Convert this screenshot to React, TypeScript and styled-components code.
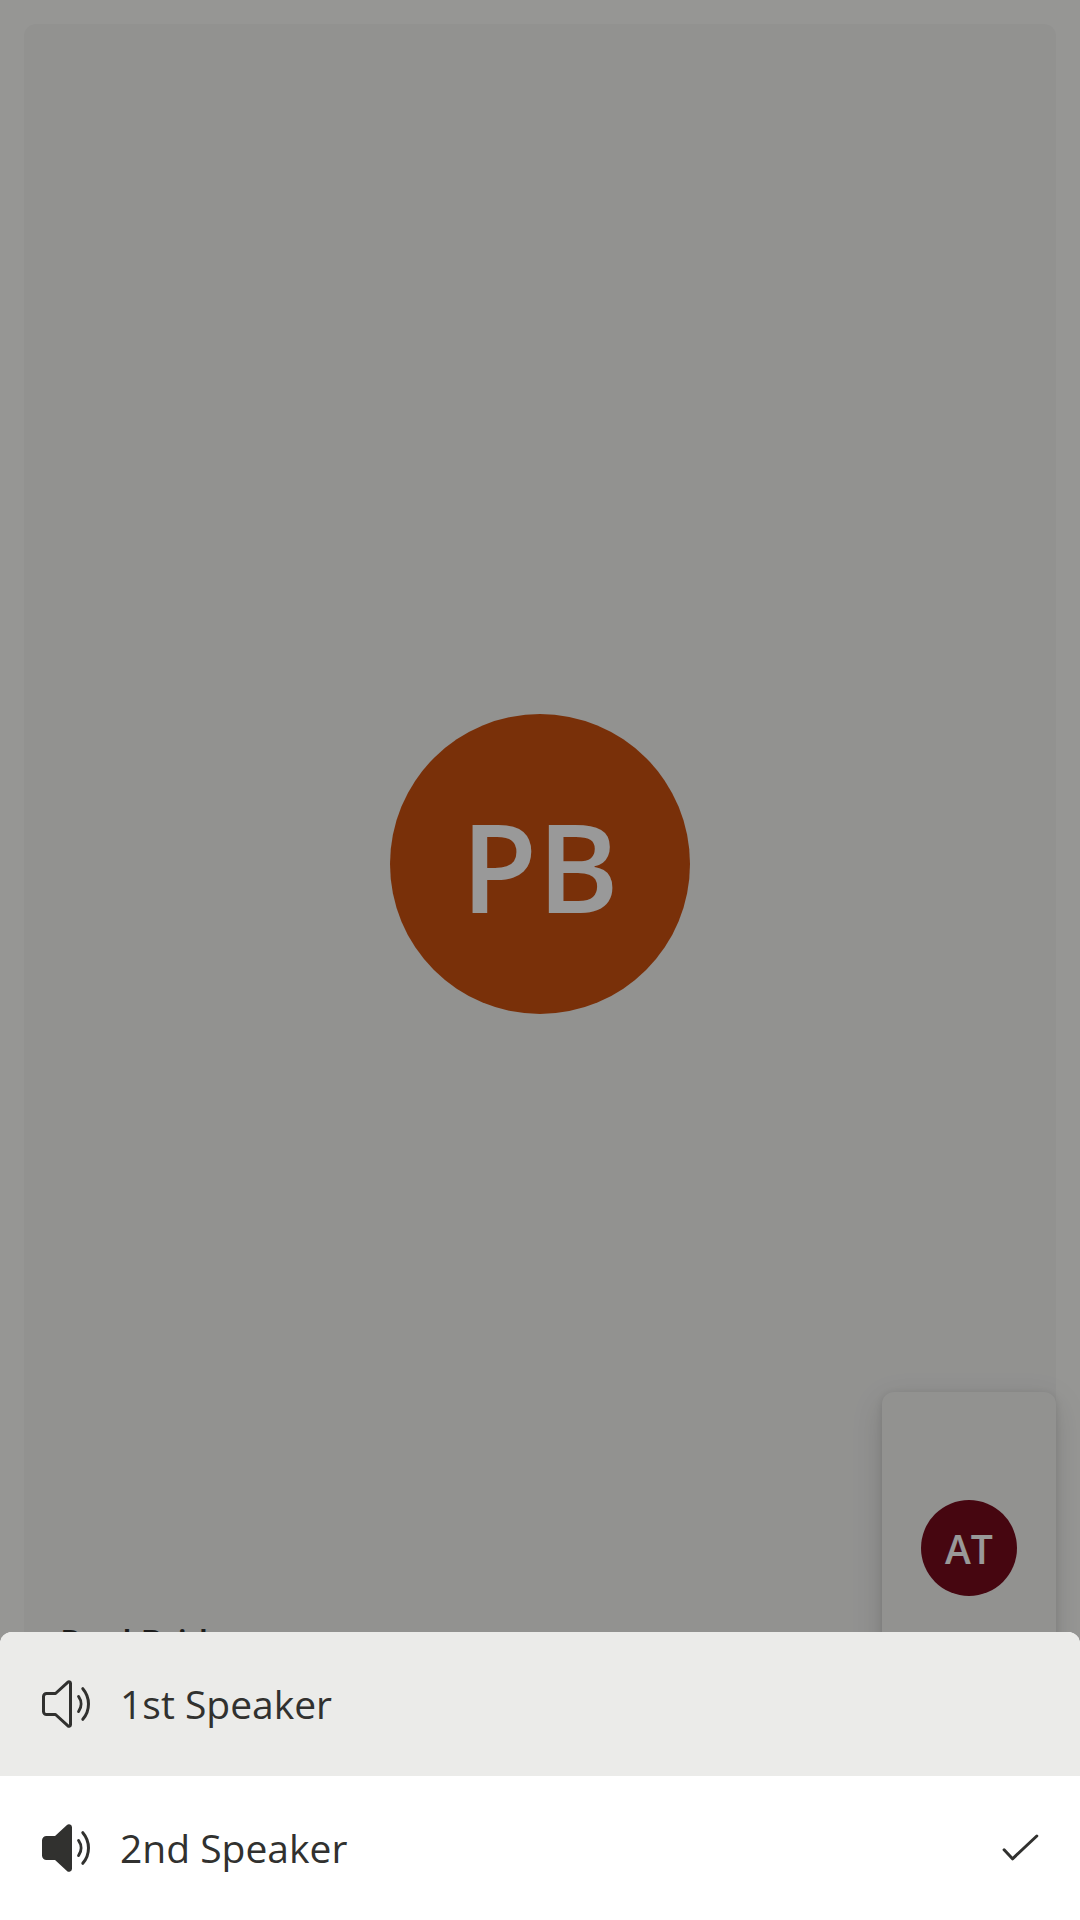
import React, { useState } from "react";
import styled, { createGlobalStyle } from "styled-components";

const GlobalStyle = createGlobalStyle`
  *, *::before, *::after { box-sizing: border-box; }
  body {
    margin: 0;
    font-family: "Open Sans", "Noto Sans", sans-serif;
    color: #31312f;
  }
`;

const CallScreen = styled.main`
  display: grid;
  min-height: 100vh;
  padding: 24px 24px 216px;
  background: #fafaf7;
`;

const VideoTile = styled.section`
  grid-area: 1 / 1;
  display: grid;
  place-items: center;
  border-radius: 12px;
  background: #f3f3f1;
`;

const LocalTile = styled(VideoTile)`
  place-self: end;
  width: 174px;
  height: 312px;
  box-shadow: 0 10px 32px rgba(0, 0, 0, 0.13), 0 2px 8px rgba(0, 0, 0, 0.11);
`;

const Avatar = styled.div<{ $size: number; $font: number; $color: string }>`
  grid-area: 1 / 1;
  display: flex;
  align-items: center;
  justify-content: center;
  width: ${(p) => p.$size}px;
  height: ${(p) => p.$size}px;
  border-radius: 50%;
  background: ${(p) => p.$color};
  color: #fff;
  font-size: ${(p) => p.$font}px;
  font-weight: 600;
`;

const DisplayName = styled.span`
  grid-area: 1 / 1;
  place-self: end start;
  padding: 36px;
  font-size: 34px;
  line-height: 52px;
  font-weight: 600;
`;

const Scrim = styled.div`
  position: fixed;
  inset: 0;
  display: flex;
  flex-direction: column;
  justify-content: flex-end;
  background: rgba(0, 0, 0, 0.4);
`;

const Drawer = styled.div`
  overflow: hidden;
  border-radius: 12px 12px 0 0;
  background: #fff;
`;

const DrawerItem = styled.button<{ $highlighted: boolean }>`
  display: flex;
  align-items: center;
  gap: 24px;
  width: 100%;
  height: 144px;
  padding: 0 36px;
  border: 0;
  background: ${(p) => (p.$highlighted ? "#ebebe9" : "#fff")};
  color: inherit;
  font-family: inherit;
  font-size: 39px;
  line-height: 52px;
  text-align: left;
  cursor: pointer;
`;

const ItemLabel = styled.span`
  flex: 1;
`;

const Icon = styled.svg`
  flex: none;
  width: 60px;
  height: 60px;
  fill: none;
  stroke: currentColor;
  stroke-linecap: round;
  stroke-linejoin: round;
`;

const SpeakerIcon = ({ filled }: { filled: boolean }) => (
  <Icon viewBox="0 0 20 20" aria-hidden="true">
    <path
      d="M3.5 6.5H6.5L10.66 2.7A.5.5 0 0 1 11.5 3.06V16.94A.5.5 0 0 1 10.66 17.3L6.5 13.5H3.5A1 1 0 0 1 2.5 12.5V7.5A1 1 0 0 1 3.5 6.5Z"
      fill={filled ? "currentColor" : "none"}
    />
    <path d="M14.2 7.5A4.3 4.3 0 0 1 14.2 12.5M15.6 4.9A7.8 7.8 0 0 1 15.6 15.1" />
  </Icon>
);

const CheckIcon = () => (
  <Icon viewBox="0 0 20 20" aria-hidden="true">
    <path d="M6.7 10.6L9.5 13.6L17.6 6" />
  </Icon>
);

const speakers = ["1st Speaker", "2nd Speaker"];

export default function App() {
  const [selected, setSelected] = useState(1);

  return (
    <>
      <GlobalStyle />
      <CallScreen>
        <VideoTile>
          <Avatar $size={300} $font={124} $color="#ca5010">PB</Avatar>
          <DisplayName>Paul Bridges</DisplayName>
        </VideoTile>
        <LocalTile>
          <Avatar $size={96} $font={39} $color="#750b1c">AT</Avatar>
        </LocalTile>
      </CallScreen>
      <Scrim>
        <Drawer role="menu" aria-label="Speaker">
          {speakers.map((name, i) => (
            <DrawerItem
              key={name}
              type="button"
              role="menuitemradio"
              aria-checked={i === selected}
              $highlighted={i !== selected}
              onClick={() => setSelected(i)}
            >
              <SpeakerIcon filled={i === selected} />
              <ItemLabel>{name}</ItemLabel>
              {i === selected && <CheckIcon />}
            </DrawerItem>
          ))}
        </Drawer>
      </Scrim>
    </>
  );
}
